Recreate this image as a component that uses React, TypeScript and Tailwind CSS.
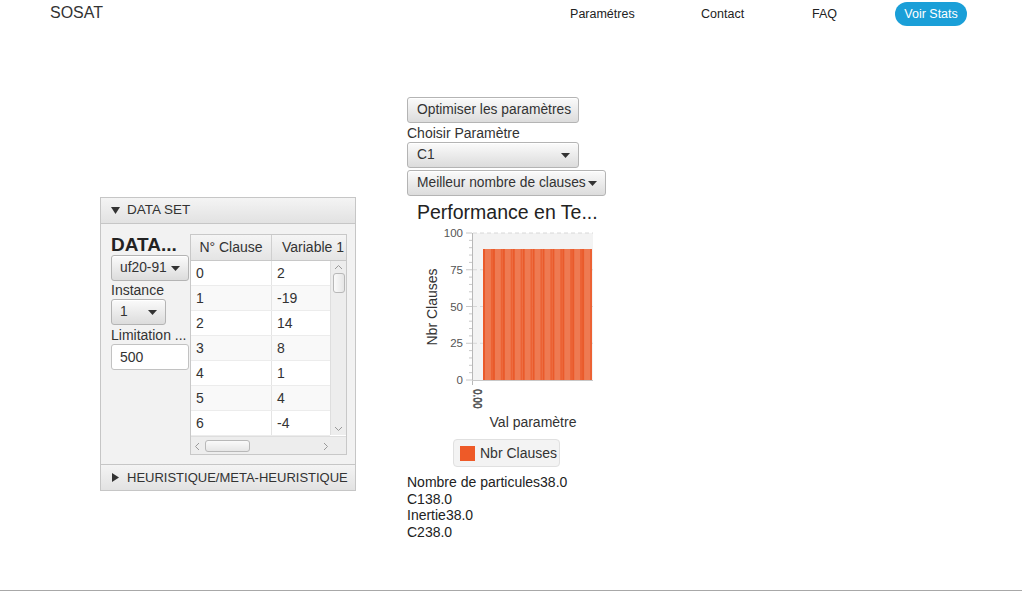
import React from "react";

const Arrow = () => (
  <svg width="9" height="5" viewBox="0 0 9 5" className="shrink-0">
    <path d="M0 0 L9 0 L4.5 5 Z" fill="#333" />
  </svg>
);

const btn =
  "flex items-center h-[26px] rounded-[3px] border border-[#b4b4b4] bg-gradient-to-b from-[#fbfbfb] to-[#dcdcdc] text-[13.8px] text-[#333] shadow-[inset_0_1px_0_#fff]";

function Combo({ label, className }: { label: string; className: string }) {
  return (
    <div className={`${btn} ${className} justify-between pl-[8px] pr-[8px]`}>
      <span>{label}</span>
      <Arrow />
    </div>
  );
}

const rows: [string, string][] = [
  ["0", "2"],
  ["1", "-19"],
  ["2", "14"],
  ["3", "8"],
  ["4", "1"],
  ["5", "4"],
  ["6", "-4"],
];

function Chart() {
  const bars = Array.from({ length: 11 });
  const bw = 109 / 11;
  const minor = Array.from({ length: 21 });
  return (
    <svg width="200" height="212" viewBox="0 0 200 212" className="block">
      <rect x="66" y="11" width="120" height="147" fill="#f3f3f3" />
      {[11, 47.75, 84.5, 121.25].map((y) => (
        <line key={y} x1="66" x2="186" y1={y} y2={y} stroke="#d8d8d8" strokeDasharray="4 3" />
      ))}
      {minor.map((_, i) => {
        const y = 11 + (147 * i) / 20;
        const major = i % 5 === 0;
        return <line key={i} x1={major ? 59 : 62} x2="65" y1={y} y2={y} stroke="#c8c8c8" />;
      })}
      <line x1="65.5" x2="65.5" y1="11" y2="163" stroke="#b8b8b8" />
      <line x1="65" x2="186" y1="158.5" y2="158.5" stroke="#c8c8c8" />
      {bars.map((_, i) => {
        const x = 76 + i * bw;
        return (
          <g key={i}>
            <rect x={x} y="27" width={bw} height="131" fill="#ee7a52" />
            <rect x={x} y="27" width="2" height="131" fill="#ea5a2a" />
            <rect x={x + bw - 2} y="27" width="2" height="131" fill="#ec6234" />
          </g>
        );
      })}
      <g fontSize="11.5" fill="#555" fontFamily="'Liberation Sans', Arial, sans-serif" textAnchor="end">
        <text x="56" y="15">100</text>
        <text x="56" y="52">75</text>
        <text x="56" y="89">50</text>
        <text x="56" y="125">25</text>
        <text x="56" y="162">0</text>
      </g>
      <g fontSize="10" fill="#555" fontFamily="'Liberation Sans', Arial, sans-serif">
        {[0, 1, 2].map((k) => (
          <text key={k} transform={`translate(${66 + k * 0.6} 167) rotate(90)`}>0.00</text>
        ))}
      </g>
      <text
        transform="translate(30 85) rotate(-90)"
        textAnchor="middle"
        fontSize="14"
        fill="#333"
        fontFamily="'Liberation Sans', Arial, sans-serif"
      >
        Nbr Clauses
      </text>
      <text x="126" y="205" textAnchor="middle" fontSize="14" fill="#333" fontFamily="'Liberation Sans', Arial, sans-serif">
        Val paramètre
      </text>
    </svg>
  );
}

export default function App() {
  return (
    <div className="w-[1022px] h-[592px] bg-white overflow-hidden flex flex-col font-['Liberation_Sans',Arial,sans-serif] text-[#333]">
      <header className="flex items-center h-[28px] pl-[50px]">
        <div className="text-[16px] text-[#333] -mt-[3px]">SOSAT</div>
        <nav className="ml-[467px] flex items-center text-[12.5px] text-[#222]">
          <span className="w-[131px]">Paramétres</span>
          <span className="w-[111px]">Contact</span>
          <span className="w-[83px]">FAQ</span>
          <span className="w-[72px] h-[24px] rounded-full bg-[#1a9fd8] text-white flex items-center justify-center">
            Voir Stats
          </span>
        </nav>
      </header>

      <main className="flex items-start pl-[100px] pt-[69px]">
        {/* Left accordion panel */}
        <section className="mt-[100px] w-[256px] border border-[#c6c6c6] bg-[#f2f2f2]">
          <div className="h-[26px] flex items-center pl-[10px] gap-[7px] bg-gradient-to-b from-[#f4f4f4] to-[#e2e2e2] border-b border-[#c6c6c6] text-[13.5px]">
            <svg width="9" height="7" viewBox="0 0 9 7">
              <path d="M0 0 L9 0 L4.5 7 Z" fill="#333" />
            </svg>
            <span>DATA SET</span>
          </div>
          <div className="h-[240px] flex pl-[10px] pt-[10px]">
            <div className="w-[79px] flex flex-col">
              <div className="font-bold text-[19px] leading-[19px] mt-[1px] text-[#222] whitespace-nowrap">DATA...</div>
              <Combo label="uf20-91" className="w-[78px] mt-[1px] pl-[7px] pr-[6px]" />
              <div className="text-[14px] leading-[16px] mt-[1px]">Instance</div>
              <Combo label="1" className="w-[55px] mt-[1px]" />
              <div className="text-[14px] leading-[16px] mt-[2px] whitespace-nowrap">Limitation ...</div>
              <div className="w-[78px] h-[26px] mt-[1px] rounded-[3px] border border-[#c2c2c2] bg-white text-[14px] flex items-center pl-[8px]">
                500
              </div>
            </div>
            <div className="w-[157px] h-[221px] border border-[#c8c8c8] bg-white flex flex-col overflow-hidden">
              <div className="h-[26px] flex shrink-0 bg-gradient-to-b from-[#f5f5f5] to-[#e4e4e4] border-b border-[#c8c8c8] text-[14px] whitespace-nowrap">
                <div className="w-[81px] shrink-0 border-r border-[#cfcfcf] flex items-center justify-center">N° Clause</div>
                <div className="pl-[10px] flex items-center">Variable 1</div>
              </div>
              <div className="flex flex-1">
                <div className="flex-1 flex flex-col">
                  {rows.map(([a, b], i) => (
                    <div
                      key={a}
                      className={`h-[25px] shrink-0 flex text-[14px] border-b border-[#ececec] ${i % 2 === 1 ? "bg-[#f9f9f9]" : "bg-white"}`}
                    >
                      <div className="w-[81px] shrink-0 border-r border-[#e4e4e4] flex items-center pl-[5px]">{a}</div>
                      <div className="flex items-center pl-[5px]">{b}</div>
                    </div>
                  ))}
                </div>
                <div className="w-[16px] h-[174px] bg-[#ededed] border-l border-[#dedede] flex flex-col items-center">
                  <svg width="9" height="6" viewBox="0 0 9 6" className="mt-[3px]">
                    <path d="M1 5 L4.5 1.5 L8 5" stroke="#999" fill="none" />
                  </svg>
                  <div className="w-[12px] h-[20px] mt-[3px] rounded-[3px] border border-[#b8b8b8] bg-gradient-to-r from-[#fafafa] to-[#e6e6e6]" />
                  <svg width="9" height="6" viewBox="0 0 9 6" className="mt-auto mb-[3px]">
                    <path d="M1 1 L4.5 4.5 L8 1" stroke="#999" fill="none" />
                  </svg>
                </div>
              </div>
              <div className="h-[19px] shrink-0 flex items-center bg-[#ededed] border-t border-[#dedede]">
                <div className="w-[140px] flex items-center h-full pl-[3px]">
                  <svg width="6" height="9" viewBox="0 0 6 9">
                    <path d="M5 1 L1.5 4.5 L5 8" stroke="#999" fill="none" />
                  </svg>
                  <div className="w-[45px] h-[12px] ml-[5px] rounded-[3px] border border-[#b8b8b8] bg-gradient-to-b from-[#fafafa] to-[#e6e6e6]" />
                  <svg width="6" height="9" viewBox="0 0 6 9" className="ml-auto mr-[2px]">
                    <path d="M1 1 L4.5 4.5 L1 8" stroke="#999" fill="none" />
                  </svg>
                </div>
              </div>
            </div>
          </div>
          <div className="h-[26px] flex items-center pl-[11px] gap-[8px] bg-gradient-to-b from-[#f4f4f4] to-[#e2e2e2] border-t border-[#c6c6c6] text-[13px] whitespace-nowrap">
            <svg width="7" height="9" viewBox="0 0 7 9">
              <path d="M0 0 L7 4.5 L0 9 Z" fill="#333" />
            </svg>
            <span>HEURISTIQUE/META-HEURISTIQUE</span>
          </div>
        </section>

        {/* Middle column */}
        <section className="ml-[51px] flex flex-col items-start">
          <div className={`${btn} w-[172px] pl-[9px] whitespace-nowrap`}>Optimiser les paramètres</div>
          <div className="text-[14px] leading-[16px] mt-[2px]">Choisir Paramètre</div>
          <Combo label="C1" className="w-[172px] mt-[1px] pl-[9px] pr-[8px]" />
          <Combo label="Meilleur nombre de clauses" className="w-[199px] mt-[2px] pl-[9px] pr-[8px] whitespace-nowrap text-[13.4px]" />
          <div className="text-[19.5px] leading-[20px] h-[20px] mt-[6px] ml-[10px] text-[#222] whitespace-nowrap">Performance en Te...</div>
          <Chart />
          <div className="ml-[46px] mt-[5px] h-[28px] w-[107px] rounded-[4px] border border-[#e0e0e0] bg-[#f3f3f3] flex items-center pl-[6px] gap-[5px] text-[14px]">
            <div className="w-[15px] h-[15px] bg-[#ee5a28]" />
            <span>Nbr Clauses</span>
          </div>
          <div className="mt-[7px] text-[14px] leading-[16.7px] text-[#222] whitespace-nowrap">
            <div>Nombre de particules38.0</div>
            <div>C138.0</div>
            <div>Inertie38.0</div>
            <div>C238.0</div>
          </div>
        </section>
      </main>

      <div className="mt-auto mb-[1px] h-[1px] bg-[#a8a8a8]" />
    </div>
  );
}
